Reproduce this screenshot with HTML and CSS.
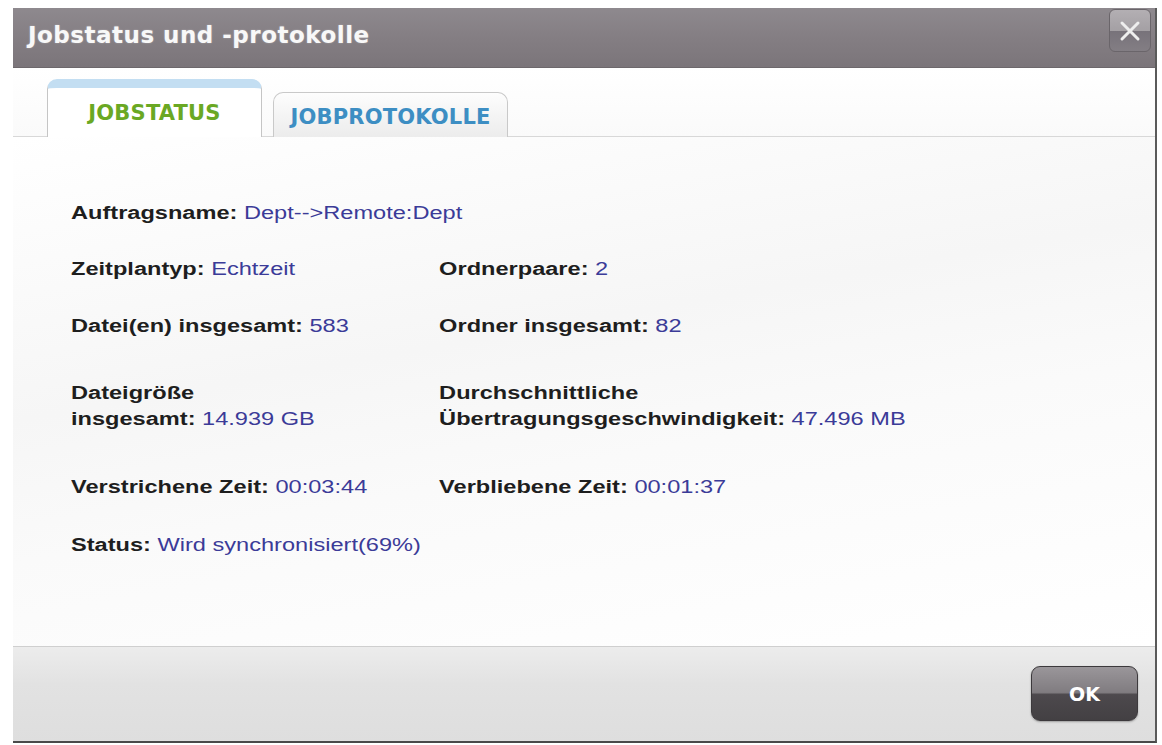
FILE: index.html
```html
<!DOCTYPE html>
<html lang="de">
<head>
<meta charset="utf-8">
<title>Jobstatus und -protokolle</title>
<link rel="stylesheet" href="styles.css">
</head>
<body>
<div class="dialog">
  <div class="titlebar">
    <div class="title">Jobstatus und -protokolle</div>
    <div class="close" aria-label="Schließen">
      <svg width="22" height="22" viewBox="0 0 22 22"><path d="M3 3 L19 19 M19 3 L3 19" stroke="#eeeeee" stroke-width="3" stroke-linecap="round"/></svg>
    </div>
  </div>
  <div class="tabs">
    <div class="tab active"><span>JOBSTATUS</span></div>
    <div class="tab"><span>JOBPROTOKOLLE</span></div>
  </div>
  <div class="content">
    <div class="info">
      <div class="row"><div class="cell"><b>Auftragsname:</b> <span class="v">Dept--&gt;Remote:Dept</span></div></div>
      <div class="row r2"><div class="cell"><b>Zeitplantyp:</b> <span class="v">Echtzeit</span></div><div class="cell"><b>Ordnerpaare:</b> <span class="v">2</span></div></div>
      <div class="row r3"><div class="cell"><b>Datei(en) insgesamt:</b> <span class="v">583</span></div><div class="cell"><b>Ordner insgesamt:</b> <span class="v">82</span></div></div>
      <div class="row r4"><div class="cell"><b>Dateigröße<br>insgesamt:</b> <span class="v">14.939 GB</span></div><div class="cell"><b>Durchschnittliche<br>Übertragungsgeschwindigkeit:</b> <span class="v">47.496 MB</span></div></div>
      <div class="row r5"><div class="cell"><b>Verstrichene Zeit:</b> <span class="v">00:03:44</span></div><div class="cell"><b>Verbliebene Zeit:</b> <span class="v">00:01:37</span></div></div>
      <div class="row r6"><div class="cell"><b>Status:</b> <span class="v">Wird synchronisiert(69%)</span></div></div>
    </div>
  </div>
  <div class="footer">
    <div class="ok">OK</div>
  </div>
</div>
</body>
</html>
```
FILE: styles.css
```css
html, body { margin: 0; padding: 0; background: #fff; }
body { width: 1162px; height: 745px; overflow: hidden; font-family: "Liberation Sans", Arial, sans-serif; }

.dialog {
  margin: 8px 0 0 13px;
  width: 1142px;
  height: 733px;
  border-right: 2px solid #5a5a5a;
  border-bottom: 2px solid #4a4a4a;
  display: flex;
  flex-direction: column;
  background: #fff;
}

.titlebar {
  height: 59px;
  flex: none;
  background: linear-gradient(#8e898e, #847e83 50%, #7b757a);
  display: flex;
  align-items: center;
  justify-content: space-between;
  padding: 0 3px 0 15px;
  border-bottom: 1px solid #6d686c;
}
.title {
  color: #f8f8f8;
  font-family: "DejaVu Sans", sans-serif;
  font-size: 23px;
  font-weight: bold;
  letter-spacing: 0.5px;
  margin-top: -5px;
  text-shadow: 0 0 2px rgba(255,255,255,0.35);
}
.close {
  width: 40px;
  height: 41px;
  margin-top: -14px;
  margin-right: 1px;
  border: 1px solid #6a656a;
  border-radius: 6px;
  background: linear-gradient(#b3afb3, #a4a0a4 50%, #77727a 50%, #837e84);
  display: flex;
  align-items: center;
  justify-content: center;
}

.tabs {
  height: 68px;
  flex: none;
  display: flex;
  align-items: flex-end;
  gap: 11px;
  padding-left: 34px;
  border-bottom: 1px solid #d8d8d8;
  background: linear-gradient(#fff, #fafafa);
}
.tab {
  height: 45px;
  width: 235px;
  box-sizing: border-box;
  border: 1px solid #c9c9c9;
  border-bottom: none;
  border-radius: 10px 10px 0 0;
  background: linear-gradient(#fdfdfd, #ececec);
  display: flex;
  align-items: center;
  justify-content: center;
  font-family: "DejaVu Sans", sans-serif;
  font-weight: bold;
  font-size: 21px;
  letter-spacing: 0.2px;
  color: #3d8ec3;
  margin-bottom: -1px;
}
.tab span { margin-top: 3px; }
.tab.active {
  width: 215px;
  height: 58px;
  background: #fff;
  border-color: #c5c5c5;
  border-top: 9px solid #c3def2;
  color: #6aa823;
}
.tab.active span { margin-top: 1px; }

.content {
  flex: 1;
  padding: 63px 0 0 58px;
  background: linear-gradient(170deg, #ffffff 0%, #f6f6f6 40%, #fafafa 60%, #ffffff 100%);
  overflow: hidden;
}
.info {
  width: max-content;
  transform: scaleX(1.31);
  transform-origin: 0 0;
}
.row { display: flex; font-size: 18px; line-height: 26px; color: #1e1e1e; }
.row b { font-weight: bold; }
.cell { width: 281px; flex: none; white-space: nowrap; }
.v { color: #3b3b98; }
.r2 { margin-top: 30px; }
.r3 { margin-top: 31px; }
.r4 { margin-top: 41px; }
.r5 { margin-top: 42px; }
.r6 { margin-top: 32px; }

.footer {
  height: 94px;
  flex: none;
  border-top: 1px solid #cfcfcf;
  background: linear-gradient(#ececec, #e2e2e2 40%, #dedede);
  display: flex;
  justify-content: flex-end;
  align-items: flex-start;
  padding-right: 17px;
}
.ok {
  margin-top: 19px;
  width: 107px;
  height: 55px;
  box-sizing: border-box;
  border: 1px solid #3c393c;
  border-radius: 9px;
  background: linear-gradient(#9a969a, #807c80 48%, #4d494d 52%, #434043);
  color: #fff;
  font-family: "DejaVu Sans", sans-serif;
  font-weight: bold;
  font-size: 19px;
  display: flex;
  align-items: center;
  justify-content: center;
  box-shadow: 0 1px 2px rgba(0,0,0,0.3);
}
```
